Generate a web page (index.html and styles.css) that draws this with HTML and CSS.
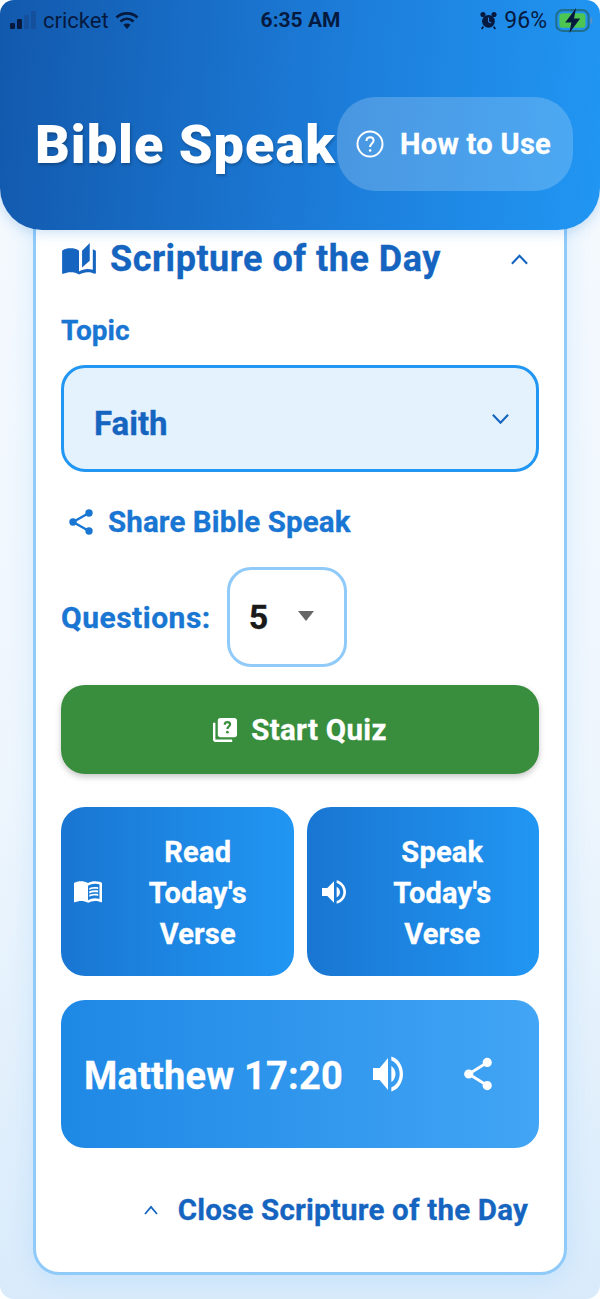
FILE: index.html
```html
<!DOCTYPE html>
<html lang="en">
<head>
    <meta charset="UTF-8">
    <meta name="viewport" content="width=device-width, initial-scale=1.0">
    <title>Bible Speak</title>
    <link rel="stylesheet" href="styles.css">
</head>
<body>
    <div class="screen">

        <!-- header -->
        <header class="header">
            <div class="status">
                <div class="status-left">
                    <div class="signal">
                        <span class="bar bar1"></span>
                        <span class="bar bar2"></span>
                        <span class="bar bar3"></span>
                        <span class="bar bar4"></span>
                    </div>
                    <span class="carrier">cricket</span>
                    <svg class="wifi" viewBox="0 0 24 18" fill="none" stroke="#061a3f" stroke-width="2.8">
                        <path d="M1.5 6.5C7.5 1 16.500 1 22.500 6.500"/>
                        <path d="M5.500 10.500C9.500 7 14.500 7 18.500 10.500"/>
                        <path d="M12 18l-3.600-4.300c2.200-1.600 5-1.600 7.200 0z" fill="#061a3f" stroke="none"/>
                    </svg>
                </div>
                <span class="time">6:35 AM</span>
                <div class="status-right">
                    <svg class="alarm" viewBox="0 0 20 22" fill="#061a3f">
                        <circle cx="10" cy="12" r="7.500"/>
                        <circle cx="3.500" cy="4" r="3"/>
                        <circle cx="16.500" cy="4" r="3"/>
                        <path d="M10 7.500v5l3 1.500" fill="none" stroke="#2a7fdc" stroke-width="1.300"/>
                        <path d="M4 18l-2 3M16 18l2 3" stroke="#061a3f" stroke-width="2"/>
                    </svg>
                    <span class="battery-pct">96%</span>
                    <svg class="battery" viewBox="0 0 36 24">
                        <rect x="1" y="2" width="31" height="20" rx="6" fill="none" stroke="#1f6f8c" stroke-width="2"/>
                        <rect x="4" y="5" width="25" height="14" rx="3" fill="#4cc552"/>
                        <rect x="33.500" y="9" width="2" height="6" rx="1" fill="#5b93c7"/>
                        <path d="M20 0L9.500 14h6L13.500 24 24 10h-6z" fill="#061a3f"/>
                    </svg>
                </div>
            </div>
            <div class="title-row">
                <h1 class="app-title">Bible Speak</h1>
                <button class="how-btn">
                    <svg class="how-icon" viewBox="0 0 28 28" fill="none" stroke="#fff" stroke-width="2">
                        <circle cx="14" cy="14" r="12.500"/>
                        <path d="M10.500 11c0-2.200 1.600-3.700 3.600-3.700s3.500 1.400 3.500 3.300c0 2.900-3.500 3-3.500 6.400"/>
                        <circle cx="14.100" cy="20.500" r="1.300" fill="#fff" stroke="none"/>
                    </svg>
                    How to Use
                </button>
            </div>
        </header>

        <!-- scripture card -->
        <main class="card">
            <div class="card-head">
                <svg class="stories-icon" viewBox="1 1 22 21.500" fill="#1565c0">
                    <path d="M19 1l-5 5v11l5-4.500V1zM1 6v14.650c0 .25.25.5.5.5.1 0 .15-.05.25-.05C3.100 20.450 5.050 20 6.500 20c1.950 0 4.050.4 5.500 1.500V6c-1.450-1.100-3.550-1.500-5.500-1.500S2.450 4.900 1 6zm22 13.500V6c-.6-.45-1.250-.75-2-1v13.500c-1.100-.35-2.300-.5-3.500-.5-1.700 0-4.150.65-5.500 1.500v2c1.350-.85 3.800-1.500 5.500-1.500 1.650 0 3.350.3 4.750 1.050.1.05.15.05.25.05.25 0 .5-.25.5-.5v-1.100z"/>
                </svg>
                <h2 class="card-title">Scripture of the Day</h2>
                <svg class="chevron-up" viewBox="0 0 20 12" fill="none" stroke="#1565c0" stroke-width="2.200">
                    <path d="M2 11l8-8.500 8 8.500"/>
                </svg>
            </div>

            <label class="topic-label">Topic</label>
            <div class="topic-select">
                <span>Faith</span>
                <svg class="chevron-down" viewBox="0 0 20 12" fill="none" stroke="#1565c0" stroke-width="2.200">
                    <path d="M2 1.500l8 8.500 8-8.500"/>
                </svg>
            </div>

            <div class="share-row">
                <svg class="share-icon" viewBox="0 0 26 28" fill="#1976d2" stroke="#1976d2" stroke-width="2.400">
                    <path d="M21 5L5 14l16 9" fill="none"/>
                    <circle cx="21" cy="5" r="2.500"/>
                    <circle cx="5" cy="14" r="2.500"/>
                    <circle cx="21" cy="23" r="2.500"/>
                </svg>
                <span>Share Bible Speak</span>
            </div>

            <div class="questions-row">
                <span class="questions-label">Questions:</span>
                <div class="count-select">
                    <span class="count-value">5</span>
                    <span class="count-arrow"></span>
                </div>
            </div>

            <button class="start-btn">
                <svg class="quiz-icon" viewBox="2 2 20 20">
                    <path fill="#fff" d="M4 6H2v14c0 1.100.9 2 2 2h14v-2H4V6zm16-4H8c-1.100 0-2 .9-2 2v12c0 1.100.9 2 2 2h12c1.100 0 2-.9 2-2V4c0-1.100-.9-2-2-2z"/>
                    <path fill="none" stroke="#388e3c" stroke-width="1.800" d="M11.800 7.600c0-1.300 1-2.100 2.200-2.100s2.200.8 2.200 1.900c0 1.700-2.200 1.800-2.200 3.800"/>
                    <circle cx="14" cy="13.800" r="1.100" fill="#388e3c"/>
                </svg>
                Start Quiz
            </button>

            <div class="today-row">
                <button class="today-btn">
                    <svg class="today-icon" viewBox="1 4 22 18" fill="#fff">
                        <path d="M21 5c-1.110-.35-2.330-.5-3.500-.5-1.950 0-4.050.4-5.500 1.500-1.450-1.100-3.550-1.500-5.500-1.500S2.450 4.900 1 6v14.650c0 .25.25.5.5.5.1 0 .15-.05.25-.05C3.100 20.450 5.050 20 6.500 20c1.950 0 4.050.4 5.500 1.500 1.350-.85 3.800-1.500 5.500-1.500 1.650 0 3.350.3 4.750 1.050.1.05.15.05.25.05.25 0 .5-.25.5-.5V6c-.6-.45-1.250-.75-2-1zm0 13.500c-1.100-.35-2.300-.5-3.500-.5-1.700 0-4.150.65-5.500 1.500V8c1.350-.85 3.800-1.500 5.500-1.500 1.200 0 2.400.15 3.500.5v11.500z"/>
                        <path d="M17.500 10.500c.88 0 1.730.09 2.500.26V9.240c-.79-.15-1.640-.24-2.500-.24-1.700 0-3.240.29-4.500.83v1.660c1.130-.64 2.700-.99 4.500-.99zM13 12.490v1.660c1.130-.64 2.700-.99 4.500-.99.88 0 1.730.09 2.500.26V11.900c-.79-.15-1.640-.24-2.500-.24-1.700 0-3.240.3-4.500.83zM17.500 14.330c-1.700 0-3.240.29-4.500.83v1.660c1.130-.64 2.700-.99 4.500-.99.88 0 1.730.09 2.500.26v-1.520c-.79-.16-1.640-.24-2.500-.24z"/>
                    </svg>
                    <span class="today-text">Read<br>Today's<br>Verse</span>
                </button>
                <button class="today-btn">
                    <svg class="today-icon speak" viewBox="3 3 18 18" fill="#fff">
                        <path d="M3 9v6h4l5 5V4L7 9H3zm13.500 3c0-1.770-1.020-3.290-2.500-4.030v8.050c1.480-.73 2.500-2.250 2.500-4.020zM14 3.230v2.060c2.890.86 5 3.540 5 6.710s-2.110 5.850-5 6.710v2.060c4.010-.91 7-4.490 7-8.770s-2.990-7.860-7-8.770z"/>
                    </svg>
                    <span class="today-text">Speak<br>Today's<br>Verse</span>
                </button>
            </div>

            <div class="verse-box">
                <span class="verse-ref">Matthew 17:20</span>
                <svg class="verse-speak" viewBox="3 3 18 18" preserveAspectRatio="none" fill="#fff">
                    <path d="M3 9v6h4l5 5V4L7 9H3zm13.500 3c0-1.770-1.020-3.290-2.500-4.030v8.050c1.480-.73 2.500-2.250 2.500-4.020zM14 3.230v2.060c2.890.86 5 3.540 5 6.710s-2.110 5.850-5 6.710v2.060c4.010-.91 7-4.490 7-8.770s-2.990-7.860-7-8.770z"/>
                </svg>
                <svg class="verse-share" viewBox="0 0 26 30" fill="#fff" stroke="#fff" stroke-width="2.400">
                    <path d="M21 5L5 15l16 10" fill="none"/>
                    <circle cx="21" cy="5" r="2.800"/>
                    <circle cx="5" cy="15" r="2.800"/>
                    <circle cx="21" cy="25" r="2.800"/>
                </svg>
            </div>

            <div class="close-row">
                <svg class="close-chevron" viewBox="0 0 14 10" fill="none" stroke="#1565c0" stroke-width="1.800">
                    <path d="M1 9l6-7 6 7"/>
                </svg>
                <span>Close Scripture of the Day</span>
            </div>
        </main>

    </div>
</body>
</html>
```

FILE: styles.css
```css
* {
    box-sizing: border-box;
}

html, body {
    margin: 0;
    background: #fff;
}

body {
    font-family: Roboto, "Liberation Sans", sans-serif;
}

button {
    font-family: inherit;
    border: none;
    color: #fff;
}

h1, h2 {
    margin: 0;
}

svg {
    display: block;
    flex: none;
}

.screen {
    height: 1299px;
    overflow: hidden;
    border-radius: 14px;
    background: linear-gradient(180deg, #f6fafe 0%, #eef6fd 60%, #d9ebfb 100%);
}

/* header */
.header {
    position: relative;
    z-index: 2;
    height: 230px;
    padding: 0 27px 0 35px;
    border-radius: 0 0 42px 42px;
    background: linear-gradient(95deg, #1259ad 0%, #1d7fdc 60%, #2196f3 100%);
    box-shadow: 0 2px 14px rgba(25, 118, 210, .25);
}

.status {
    display: grid;
    grid-template-columns: 1fr auto 1fr;
    align-items: center;
    height: 40px;
    margin: 0 -20px 0 -25px;
    color: #061a3f;
    font-size: 22px;
}

.status-left, .status-right {
    display: flex;
    align-items: center;
}

.status-right {
    justify-content: flex-end;
}

.signal {
    display: flex;
    align-items: flex-end;
    gap: 2px;
    height: 18px;
}

.bar {
    width: 5px;
    border-radius: 1px;
    background: #061a3f;
}

.bar1 { height: 6px; }
.bar2 { height: 10px; }
.bar3 { height: 14px; background: #14509c; }
.bar4 { height: 18px; background: #14509c; }

.carrier {
    margin-left: 7px;
}

.wifi {
    width: 24px;
    height: 18px;
    margin-left: 6px;
}

.time {
    margin-left: -2px;
    font-weight: 700;
    font-size: 21px;
}

.alarm {
    width: 17px;
    height: 19px;
}

.battery-pct {
    margin-left: 7px;
    font-size: 23px;
}

.battery {
    width: 38px;
    height: 25px;
    margin-left: 8px;
}

.title-row {
    display: flex;
    align-items: center;
    margin-top: 57px;
}

.app-title {
    flex: none;
    width: 302px;
    color: #fff;
    font-size: 54px;
    font-weight: 900;
    letter-spacing: 1px;
    white-space: nowrap;
    text-shadow: 1px 2px 3px rgba(0, 0, 0, .25);
}

.how-btn {
    display: flex;
    align-items: center;
    gap: 16px;
    width: 236px;
    height: 94px;
    padding-left: 19px;
    border-radius: 38px;
    background: rgba(255, 255, 255, .2);
    font-size: 29px;
    font-weight: 700;
    letter-spacing: .3px;
    white-space: nowrap;
    -webkit-text-stroke: .3px;
}

.how-icon {
    width: 28px;
    height: 28px;
}

/* card */
.card {
    width: 534px;
    height: 1075px;
    margin: -30px auto 0;
    padding: 26px 25px 0;
    border: 3px solid #90caf9;
    border-radius: 0 0 26px 26px;
    background: #fff;
    box-shadow: 0 4px 26px rgba(33, 150, 243, .12);
    -webkit-text-stroke: .3px;
}

.card-head {
    display: flex;
    align-items: center;
    height: 60px;
}

.stories-icon {
    width: 34px;
    height: 33px;
    margin: 0 14px 0 1px;
}

.card-title {
    flex: 1;
    color: #1565c0;
    font-size: 36px;
    font-weight: 700;
    letter-spacing: .5px;
}

.chevron-up {
    width: 19px;
    height: 12px;
    margin-right: 10px;
}

.topic-label {
    display: block;
    margin-top: 22px;
    color: #1976d2;
    font-size: 28px;
    font-weight: 700;
    line-height: 40px;
}

.topic-select {
    display: flex;
    align-items: center;
    justify-content: space-between;
    height: 107px;
    margin-top: 14px;
    padding: 10px 26px 0 30px;
    border: 3px solid #2196f3;
    border-radius: 24px;
    background: #e3f2fd;
    color: #1565c0;
    font-size: 33px;
    font-weight: 700;
}

.chevron-down {
    width: 19px;
    height: 12px;
    margin-bottom: 10px;
}

.share-row {
    display: flex;
    align-items: center;
    gap: 14px;
    height: 40px;
    margin-top: 30px;
    padding-left: 7px;
    color: #1976d2;
    font-size: 29.500px;
    font-weight: 700;
    letter-spacing: .1px;
}

.share-icon {
    width: 26px;
    height: 28px;
}

.questions-row {
    display: flex;
    align-items: center;
    gap: 16px;
    margin-top: 25px;
}

.questions-label {
    color: #1976d2;
    font-size: 30px;
    font-weight: 700;
    letter-spacing: .5px;
}

.count-select {
    display: flex;
    align-items: center;
    width: 120px;
    height: 100px;
    padding-left: 19px;
    border: 3px solid #90caf9;
    border-radius: 24px;
    background: #fff;
}

.count-value {
    width: 49px;
    color: #1a1a1a;
    font-size: 34px;
    font-weight: 700;
}

.count-arrow {
    width: 0;
    height: 0;
    margin-bottom: 2px;
    border-left: 8.500px solid transparent;
    border-right: 8.500px solid transparent;
    border-top: 10px solid #666;
}

.start-btn {
    display: flex;
    align-items: center;
    justify-content: center;
    gap: 14px;
    width: 100%;
    height: 89px;
    margin-top: 18px;
    border-radius: 24px;
    background: #388e3c;
    box-shadow: 0 3px 6px rgba(0, 0, 0, .22);
    font-size: 29.500px;
    font-weight: 700;
    letter-spacing: .3px;
}

.quiz-icon {
    width: 24px;
    height: 26px;
}

.today-row {
    display: flex;
    gap: 13px;
    margin-top: 33px;
}

.today-btn {
    flex: 1;
    display: flex;
    align-items: center;
    height: 169px;
    padding: 0 0 0 13px;
    border-radius: 24px;
    background: linear-gradient(90deg, #1976d2, #2196f3);
    font-size: 29px;
    font-weight: 700;
    letter-spacing: .2px;
}

.today-text {
    flex: 1;
    padding-top: 4px;
    line-height: 41px;
    text-align: center;
}

.today-icon {
    width: 28px;
    height: 26px;
}

.today-icon.speak {
    width: 24px;
    height: 24px;
    margin-left: 2px;
}

.verse-box {
    display: flex;
    align-items: center;
    height: 148px;
    margin-top: 24px;
    padding: 0 0 0 23px;
    border-radius: 24px;
    background: linear-gradient(90deg, #1e88e5, #42a5f5);
    color: #fff;
}

.verse-ref {
    width: 289px;
    padding-top: 4px;
    font-size: 38px;
    font-weight: 700;
    letter-spacing: .2px;
    white-space: nowrap;
}

.verse-speak {
    width: 30px;
    height: 36px;
}

.verse-share {
    width: 30px;
    height: 38px;
    margin-left: 60px;
}

.close-row {
    display: flex;
    align-items: center;
    justify-content: flex-end;
    gap: 20px;
    height: 40px;
    margin-top: 42px;
    padding-right: 11px;
    color: #1565c0;
    font-size: 29.500px;
    font-weight: 700;
    letter-spacing: .2px;
}

.close-chevron {
    width: 14px;
    height: 10px;
}
```
